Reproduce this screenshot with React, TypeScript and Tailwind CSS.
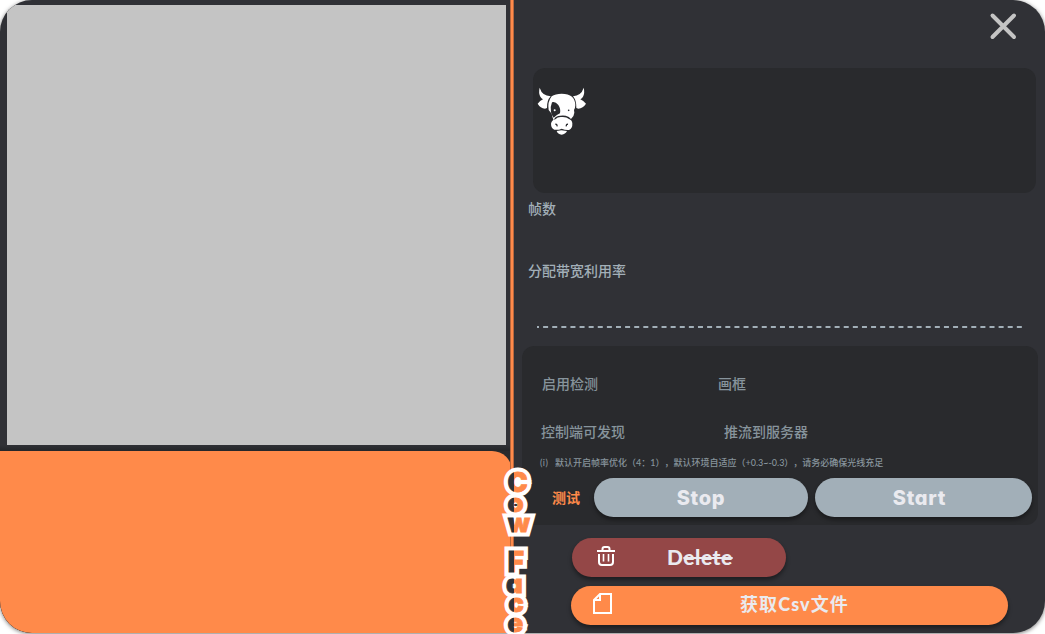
import React from "react";

const bodyFont = "font-['Lato','Noto_Sans_CJK_SC',sans-serif]";

const letters = [
  { ch: "C", x: 517.5, y: 491.5, size: 27 },
  { ch: "o", x: 515.5, y: 512, size: 26 },
  { ch: "w", x: 519, y: 532, size: 25 },
  { ch: "F", x: 516, y: 572, size: 28 },
  { ch: "a", x: 514.5, y: 592.5, size: 26 },
  { ch: "c", x: 516, y: 611.5, size: 26 },
  { ch: "e", x: 515.5, y: 631.5, size: 26 },
];

function VerticalTitle() {
  return (
    <svg className="pointer-events-none absolute left-[490px] top-[450px]" width="60" height="184" viewBox="490 450 60 184">
      <defs>
        <linearGradient id="split" gradientUnits="userSpaceOnUse" x1="490" x2="538" y1="0" y2="0">
          <stop offset="0.5" stopColor="#303136" />
          <stop offset="0.5" stopColor="#ff8a4a" />
        </linearGradient>
        <g id="title" textAnchor="middle" className="font-['Inter',sans-serif] font-black [font-feature-settings:'cv11']">
          {letters.map((l, i) => (
            <text key={i} x={l.x} y={l.y} fontSize={l.size}>
              {l.ch}
            </text>
          ))}
        </g>
      </defs>
      <use href="#title" fill="#fff" stroke="#fff" strokeWidth="9" strokeLinejoin="miter" strokeMiterlimit="2" />
      <use href="#title" fill="url(#split)" stroke="url(#split)" strokeWidth="0.8" />
    </svg>
  );
}

function CowIcon() {
  return (
    <svg width="50" height="49" viewBox="36 81 150 147" fill="#fff">
      <path d="M44 83Q40 98 46 110Q49 115 54 118Q45 122 38 131Q46 145 60 146L66 144Q65 122 77 109Q64 108 56 102Q48 96 44 83Z" />
      <path d="M176 83Q180 98 174 110Q171 115 166 118Q175 122 183 131Q174 145 160 146L154 144Q155 122 144 109Q156 108 164 102Q172 96 176 83Z" />
      <path d="M80 109Q91 101 110 101Q130 101 141 110Q151 119 151 136Q151 143 147 150L148 158Q147 170 138 177Q133 169 122 167Q99 165 90 173L86 181Q82 172 80 161L71 150Q67 126 80 109Z" />
      <path fill="#292a2d" d="M81 127Q91 124 100 135Q108 147 105 160Q96 164 86 173Q79 164 78 157Q75 140 81 127Z" />
      <circle cx="89" cy="151" r="3" />
      <circle cx="131" cy="151" r="2.5" fill="#292a2d" />
      <path d="M91 178Q98 170 110 171Q124 170 132 177Q141 180 142 190Q143 205 132 210Q121 211 110 206Q99 211 88 209Q78 204 78 191Q80 180 91 178Z" />
      <path d="M95 213L109 211L126 213Q121 223 110 224Q98 223 95 213Z" />
      <path d="M91 193Q97 192 96 199M129 193Q123 192 124 199" fill="none" stroke="#292a2d" strokeWidth="4" />
    </svg>
  );
}

function TrashIcon() {
  return (
    <svg width="18" height="20" viewBox="0 0 18 20" fill="none" stroke="#fff" strokeWidth="2">
      <path d="M0 5H18M5.5 4.5V3Q5.5 1 7.5 1H10.5Q12.5 1 12.5 3V4.5M2 8V16Q2 19 5 19H13Q16 19 16 16V8" />
      <path d="M6.5 8V15.5M11.5 8V15.5" strokeWidth="1.6" />
    </svg>
  );
}

function FileIcon() {
  return (
    <svg width="19" height="21" viewBox="0 0 19 21" fill="none" stroke="#fff" strokeWidth="2">
      <path d="M7 1H18V20H1V7L7 1V7H1" />
    </svg>
  );
}

const pill = "h-[39px] rounded-full bg-[#a2afb8] text-[20px] font-extrabold tracking-[0.7px] text-[#eaeaef] shadow-[0_3px_4px_#0006] font-['Inter',sans-serif] [font-feature-settings:'cv11']";

export default function App() {
  return (
    <div className={`relative h-[634px] w-[1045px] overflow-hidden bg-white ${bodyFont}`}>
      <div className="grid h-[633px] grid-cols-[510px_4px_1fr] overflow-hidden rounded-[32px] bg-[#303136] shadow-[0_1px_4px_#0008]">
        <section className="flex flex-col pt-[5px]">
          <div className="ml-[7px] h-[440px] w-[499px] bg-[#c4c4c4]" />
          <div className="h-1.5 bg-linear-to-b from-[#303136] to-[#242629]" />
          <div className="w-[512px] flex-1 bg-[#292a2d]">
            <div className="h-full rounded-tr-[20px] bg-[#ff8a4a]" />
          </div>
        </section>
        <div className="border-x border-[#b5663e] bg-[#ff8a4a]" />
        <section className="flex flex-col">
          <header className="flex h-[68px] justify-end pr-7 pt-3">
            <button aria-label="Close" className="h-7 w-7">
              <svg width="28" height="28" viewBox="0 0 28 28" stroke="#c4c4c4" strokeWidth="4" strokeLinecap="round">
                <path d="M3.5 3.5L25 25M25 3.5L3.5 25" />
              </svg>
            </button>
          </header>
          <div className="ml-[19px] h-[125px] w-[503px] rounded-xl bg-[#292a2d] pl-1 pt-[19px]">
            <CowIcon />
          </div>
          <div className="ml-3.5 mt-1.5 h-5 text-sm font-medium leading-5 text-[#a2afb8]">帧数</div>
          <div className="ml-3.5 mt-[42px] h-5 text-sm font-medium leading-5 text-[#a2afb8]">分配带宽利用率</div>
          <svg className="ml-[23px] mt-[45px] shrink-0" width="486" height="2">
            <path d="M0 1H486" stroke="#a2afb8" strokeWidth="2" strokeDasharray="5 4.11" strokeDashoffset="3" />
          </svg>
          <div className="ml-2 mt-[18px] flex h-[179px] w-[516px] flex-col rounded-xl bg-[#292a2d] pt-7 text-[#87949c]">
            <div className="flex h-5 pl-5 text-sm font-medium leading-5">
              <span className="w-44">启用检测</span>
              <span>画框</span>
            </div>
            <div className="mt-7 flex h-5 pl-[19px] text-sm font-medium leading-5">
              <span className="w-[183px]">控制端可发现</span>
              <span>推流到服务器</span>
            </div>
            <div className="mt-3.5 flex h-3.5 whitespace-nowrap pl-[18px] text-[9px] font-medium leading-[14px] [text-spacing-trim:space-all]">
              <span className="w-[15px] tracking-[0.4px]">(i)</span>
              <span>默认开启帧率优化（4：1），默认环境自适应（+0.3~-0.3），请务必确保光线充足</span>
            </div>
            <div className="mt-2 flex items-center">
              <span className="ml-[30px] w-[42px] text-sm font-bold text-[#ff8a4a]">测试</span>
              <button className={`w-[214px] ${pill}`}>Stop</button>
              <button className={`ml-[7px] w-[217px] shrink-0 pr-2 ${pill}`}>Start</button>
            </div>
          </div>
          <button className="ml-[58px] mt-[13px] flex h-[39px] w-[214px] items-center rounded-full bg-[#944747] pl-[25px] text-[21px] font-black text-[#eaeaef] shadow-[0_3px_4px_#0006]">
            <span className="-mt-1"><TrashIcon /></span>
            <span className="-mt-0.5 ml-[52px] tracking-[0.5px]">D<span className="line-through decoration-2">elete</span></span>
          </button>
          <button className="ml-[57px] mt-[9px] flex h-[39px] w-[437px] items-center rounded-full bg-[#ff8a4a] pl-[22px] text-lg font-bold tracking-[1.1px] text-[#eaeaef] shadow-[0_3px_4px_#0006]">
            <span className="-mt-1"><FileIcon /></span>
            <span className="-mt-[3px] ml-32">获取<span className="font-black">Csv</span>文件</span>
          </button>
        </section>
      </div>
      <VerticalTitle />
    </div>
  );
}
